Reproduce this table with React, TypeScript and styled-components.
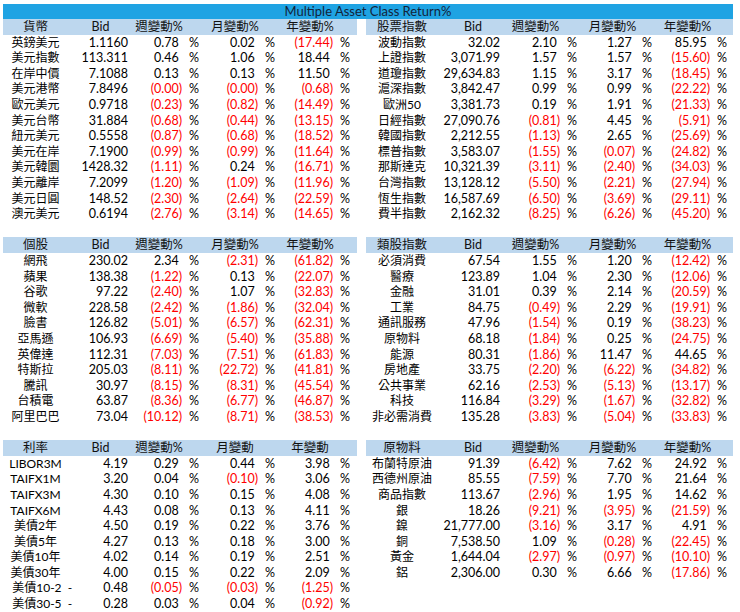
import React from 'react';
import styled, { createGlobalStyle } from 'styled-components';

const ROW = 15.6;

const GlobalStyle = createGlobalStyle`
  html, body {
    margin: 0;
    padding: 0;
    background: #fff;
  }
  body {
    font-family: Lato, "Noto Sans CJK TC", sans-serif;
    color: #000;
  }
`;

type Line = [string, string, string, string, string];

interface Block {
  head: [string, string, string, string, string];
  rows: Line[];
}

const LEFT_COLS = [65, 65, 52, 24, 52, 23, 52, 21];
const RIGHT_COLS = [72, 70, 55, 24, 51, 24, 51, 20];

const blocks: Block[][] = [
  [
    {
      head: ['貨幣', 'Bid', '週變動%', '月變動%', '年變動%'],
      rows: [
        ['英鎊美元', '1.1160', '0.78', '0.02', '-17.44'],
        ['美元指數', '113.311', '0.46', '1.06', '18.44'],
        ['在岸中價', '7.1088', '0.13', '0.13', '11.50'],
        ['美元港幣', '7.8496', '-0.00', '-0.00', '-0.68'],
        ['歐元美元', '0.9718', '-0.23', '-0.82', '-14.49'],
        ['美元台幣', '31.884', '-0.68', '-0.44', '-13.15'],
        ['紐元美元', '0.5558', '-0.87', '-0.68', '-18.52'],
        ['美元在岸', '7.1900', '-0.99', '-0.99', '-11.64'],
        ['美元韓圜', '1428.32', '-1.11', '0.24', '-16.71'],
        ['美元離岸', '7.2099', '-1.20', '-1.09', '-11.96'],
        ['美元日圓', '148.52', '-2.30', '-2.64', '-22.59'],
        ['澳元美元', '0.6194', '-2.76', '-3.14', '-14.65'],
      ],
    },
    {
      head: ['股票指數', 'Bid', '週變動%', '月變動%', '年變動%'],
      rows: [
        ['波動指數', '32.02', '2.10', '1.27', '85.95'],
        ['上證指數', '3,071.99', '1.57', '1.57', '-15.60'],
        ['道瓊指數', '29,634.83', '1.15', '3.17', '-18.45'],
        ['滬深指數', '3,842.47', '0.99', '0.99', '-22.22'],
        ['歐洲50', '3,381.73', '0.19', '1.91', '-21.33'],
        ['日經指數', '27,090.76', '-0.81', '4.45', '-5.91'],
        ['韓國指數', '2,212.55', '-1.13', '2.65', '-25.69'],
        ['標普指數', '3,583.07', '-1.55', '-0.07', '-24.82'],
        ['那斯達克', '10,321.39', '-3.11', '-2.40', '-34.03'],
        ['台灣指數', '13,128.12', '-5.50', '-2.21', '-27.94'],
        ['恆生指數', '16,587.69', '-6.50', '-3.69', '-29.11'],
        ['費半指數', '2,162.32', '-8.25', '-6.26', '-45.20'],
      ],
    },
  ],
  [
    {
      head: ['個股', 'Bid', '週變動%', '月變動%', '年變動%'],
      rows: [
        ['網飛', '230.02', '2.34', '-2.31', '-61.82'],
        ['蘋果', '138.38', '-1.22', '0.13', '-22.07'],
        ['谷歌', '97.22', '-2.40', '1.07', '-32.83'],
        ['微軟', '228.58', '-2.42', '-1.86', '-32.04'],
        ['臉書', '126.82', '-5.01', '-6.57', '-62.31'],
        ['亞馬遜', '106.93', '-6.69', '-5.40', '-35.88'],
        ['英偉達', '112.31', '-7.03', '-7.51', '-61.83'],
        ['特斯拉', '205.03', '-8.11', '-22.72', '-41.81'],
        ['騰訊', '30.97', '-8.15', '-8.31', '-45.54'],
        ['台積電', '63.87', '-8.36', '-6.77', '-46.87'],
        ['阿里巴巴', '73.04', '-10.12', '-8.71', '-38.53'],
      ],
    },
    {
      head: ['類股指數', 'Bid', '週變動%', '月變動%', '年變動%'],
      rows: [
        ['必須消費', '67.54', '1.55', '1.20', '-12.42'],
        ['醫療', '123.89', '1.04', '2.30', '-12.06'],
        ['金融', '31.01', '0.39', '2.14', '-20.59'],
        ['工業', '84.75', '-0.49', '2.29', '-19.91'],
        ['通訊服務', '47.96', '-1.54', '0.19', '-38.23'],
        ['原物料', '68.18', '-1.84', '0.25', '-24.75'],
        ['能源', '80.31', '-1.86', '11.47', '44.65'],
        ['房地產', '33.75', '-2.20', '-6.22', '-34.82'],
        ['公共事業', '62.16', '-2.53', '-5.13', '-13.17'],
        ['科技', '116.84', '-3.29', '-1.67', '-32.82'],
        ['非必需消費', '135.28', '-3.83', '-5.04', '-33.83'],
      ],
    },
  ],
  [
    {
      head: ['利率', 'Bid', '週變動%', '月變動', '年變動'],
      rows: [
        ['LIBOR3M', '4.19', '0.29', '0.44', '3.98'],
        ['TAIFX1M', '3.20', '0.04', '-0.10', '3.06'],
        ['TAIFX3M', '4.30', '0.10', '0.15', '4.08'],
        ['TAIFX6M', '4.43', '0.08', '0.13', '4.11'],
        ['美債2年', '4.50', '0.19', '0.22', '3.76'],
        ['美債5年', '4.27', '0.13', '0.18', '3.00'],
        ['美債10年', '4.02', '0.14', '0.19', '2.51'],
        ['美債30年', '4.00', '0.15', '0.22', '2.09'],
        ['   美債10-2  -', '0.48', '-0.05', '-0.03', '-1.25'],
        ['   美債30-5  -', '0.28', '0.03', '0.04', '-0.92'],
      ],
    },
    {
      head: ['原物料', 'Bid', '週變動%', '月變動%', '年變動%'],
      rows: [
        ['布蘭特原油', '91.39', '-6.42', '7.62', '24.92'],
        ['西德州原油', '85.55', '-7.59', '7.70', '21.64'],
        ['商品指數', '113.67', '-2.96', '1.95', '14.62'],
        ['銀', '18.26', '-9.21', '-3.95', '-21.59'],
        ['鎳', '21,777.00', '-3.16', '3.17', '4.91'],
        ['銅', '7,538.50', '1.09', '-0.28', '-22.45'],
        ['黃金', '1,644.04', '-2.97', '-0.97', '-10.10'],
        ['鋁', '2,306.00', '0.30', '6.66', '-17.86'],
      ],
    },
  ],
];

const Sheet = styled.div`
  width: 740px;
  height: 612px;
  padding: 3.5px 0 0 3px;
  box-sizing: border-box;
  overflow: hidden;
`;

const TitleBar = styled.div`
  width: 730px;
  height: ${ROW}px;
  line-height: ${ROW}px;
  background: #1fa3e3;
  color: #13233a;
  text-align: center;
  font-size: 13px;
`;

const Grid = styled.div`
  display: grid;
  grid-template-columns: 354px 367px;
  column-gap: 9px;
  row-gap: ${ROW}px;
  align-items: start;
`;

const Table = styled.div`
  display: flex;
  flex-direction: column;
`;

const Row = styled.div<{ $cols: number[]; $head?: boolean }>`
  display: grid;
  grid-template-columns: ${(p) => p.$cols.map((c) => `${c}px`).join(' ')};
  height: ${ROW}px;
  line-height: ${ROW + 1}px;
  font-size: 12.5px;
  background: ${(p) => (p.$head ? '#bdd7ee' : 'transparent')};
  white-space: pre;
`;

const HeadCell = styled.div`
  text-align: center;
  font-size: 12.5px;
  color: #111;
`;

const NameCell = styled.div`
  text-align: center;
  font-size: 12px;
  overflow: visible;
`;

const BidCell = styled.div<{ $pad: number }>`
  text-align: right;
  padding-right: ${(p) => p.$pad}px;
`;

const NumCell = styled.div<{ $neg: boolean }>`
  text-align: right;
  padding-right: 3px;
  color: ${(p) => (p.$neg ? '#f00' : '#000')};
`;

const Paren = styled.span`
  visibility: hidden;
`;

const PctCell = styled.div`
  padding-left: 4px;
`;

function Change({ v }: { v: string }) {
  const neg = v.startsWith('-');
  return (
    <NumCell $neg={neg}>
      {neg ? `(${v.slice(1)})` : v}
      {!neg && <Paren>)</Paren>}
    </NumCell>
  );
}

function DataTable({ block, cols, bidPad }: { block: Block; cols: number[]; bidPad: number }) {
  const [n, b, w, m, y] = block.head;
  return (
    <Table>
      <Row $cols={cols} $head>
        <HeadCell>{n}</HeadCell>
        <HeadCell>{b}</HeadCell>
        <HeadCell>{w}</HeadCell>
        <HeadCell />
        <HeadCell>{m}</HeadCell>
        <HeadCell />
        <HeadCell>{y}</HeadCell>
        <HeadCell />
      </Row>
      {block.rows.map((r) => (
        <Row $cols={cols} key={r[0]}>
          <NameCell>{r[0]}</NameCell>
          <BidCell $pad={bidPad}>{r[1]}</BidCell>
          <Change v={r[2]} />
          <PctCell>%</PctCell>
          <Change v={r[3]} />
          <PctCell>%</PctCell>
          <Change v={r[4]} />
          <PctCell>%</PctCell>
        </Row>
      ))}
    </Table>
  );
}

export default function App() {
  return (
    <>
      <GlobalStyle />
      <Sheet>
        <TitleBar>Multiple Asset Class Return%</TitleBar>
        <Grid>
          {blocks.map(([left, right]) => (
            <React.Fragment key={left.head[0]}>
              <DataTable block={left} cols={LEFT_COLS} bidPad={5} />
              <DataTable block={right} cols={RIGHT_COLS} bidPad={8} />
            </React.Fragment>
          ))}
        </Grid>
      </Sheet>
    </>
  );
}
